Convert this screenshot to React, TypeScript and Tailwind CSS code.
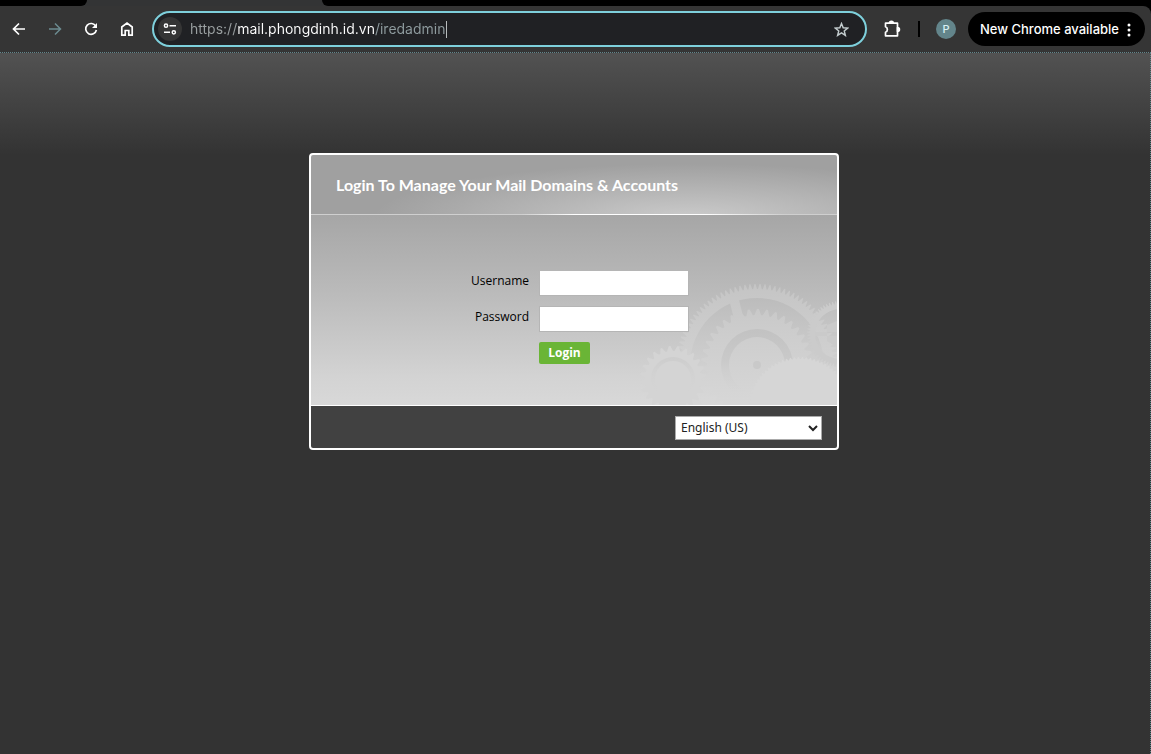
import { useState } from 'react';

const gearPath = (cx: number, cy: number, outer: number, inner: number, teeth: number) => {
  const points: string[] = [];
  for (let i = 0; i < teeth; i++) {
    const step = (Math.PI * 2) / teeth;
    const a = i * step;
    // root, root, tip, tip
    [
      [inner, 0],
      [inner, 0.2],
      [outer, 0.5],
      [outer, 0.7],
    ].forEach(([r, offset]) => {
      const t = a + step * offset;
      points.push(`${(cx + r * Math.cos(t)).toFixed(2)},${(cy + r * Math.sin(t)).toFixed(2)}`);
    });
  }
  return `M${points.join('L')}Z`;
};

const circlePath = (cx: number, cy: number, r: number) =>
  `M${cx - r},${cy}a${r},${r} 0 1,0 ${r * 2},0a${r},${r} 0 1,0 ${-r * 2},0Z`;

const iconButton = 'flex h-9 w-9 shrink-0 items-center justify-center rounded-full';

const Gears = () => (
  <svg
    aria-hidden="true"
    className="pointer-events-none absolute right-0 bottom-0"
    width="200"
    height="130"
    viewBox="0 0 200 130"
    fillRule="evenodd"
  >
    <defs>
      <linearGradient id="gearLight" gradientUnits="userSpaceOnUse" x1="0" y1="0" x2="0" y2="130">
        <stop offset="0" stopColor="#c3c3c3" />
        <stop offset="0.5" stopColor="#cecece" />
        <stop offset="1" stopColor="#d7d7d7" />
      </linearGradient>
      <linearGradient id="gearShade" gradientUnits="userSpaceOnUse" x1="0" y1="50" x2="0" y2="118">
        <stop offset="0" stopColor="#c1c1c1" />
        <stop offset="0.5" stopColor="#c9c9c9" />
        <stop offset="1" stopColor="#d3d3d3" stopOpacity="0" />
      </linearGradient>
    </defs>
    {/* large ring with spoke */}
    <path fill="url(#gearLight)" d={gearPath(120, 90, 81, 76, 100) + circlePath(120, 90, 67)} />
    <path fill="url(#gearLight)" d="M92 24l9-3 8 32-9 3z" />
    {/* middle gear */}
    <path fill="url(#gearLight)" d={gearPath(120, 90, 56, 50, 38)} />
    <path fill="url(#gearShade)" d={circlePath(120, 90, 36) + circlePath(120, 90, 28)} />
    <circle cx="120" cy="90" r="4" fill="#c9c9c9" />
    {/* small left gear */}
    <path fill="#d4d4d4" d={gearPath(36, 104, 33, 28, 24)} />
    <path fill="url(#gearShade)" fillOpacity="0.6" d={circlePath(36, 104, 22) + circlePath(36, 104, 18)} />
    {/* right edge wheel */}
    <path fill="#cbcbcb" d={gearPath(203, 59, 33, 30, 64) + circlePath(203, 59, 25)} />
    <path fill="#cacaca" d="M178 57h22v4h-22zM190 50l10-4v26l-10-6z" />
    {/* lower right gear */}
    <path fill="#d6d6d6" d={gearPath(163, 134, 52, 50, 80)} />
  </svg>
);

const TabStrip = () => (
  <div className="flex h-1.5 bg-[#333435]">
    <div className="w-[87px] rounded-br-lg bg-black" />
    <div className="w-[235px]" />
    <div className="flex-1 rounded-bl-lg bg-black" />
  </div>
);

const Toolbar = () => {
  const [url, setUrl] = useState('https://mail.phongdinh.id.vn/iredadmin');

  return (
    <div className="bg-black">
      <div className="flex h-[46px] items-center rounded-tr-lg bg-[#353535] pr-1.5 pl-px text-white">
        <button aria-label="Back" className={iconButton}>
          <svg width="14" height="14" viewBox="0 0 14 14" fill="none" stroke="currentColor" strokeWidth="1.7">
            <path d="M13 7H2M7 1.5L1.5 7 7 12.5" />
          </svg>
        </button>
        <button aria-label="Forward" className={`${iconButton} text-[#6c8b90]`}>
          <svg width="14" height="14" viewBox="0 0 14 14" fill="none" stroke="currentColor" strokeWidth="1.5">
            <path d="M1 7h11M7 1.5L12.5 7 7 12.5" />
          </svg>
        </button>
        <button aria-label="Reload" className={iconButton}>
          <svg width="14" height="14" viewBox="0 0 14 14" fill="none" stroke="currentColor" strokeWidth="1.7">
            <path d="M11.8 4.2A5.4 5.4 0 1 0 12.4 8" />
            <path d="M13 1v5H8z" fill="currentColor" stroke="none" />
          </svg>
        </button>
        <button aria-label="Home" className={iconButton}>
          <svg width="14" height="16" viewBox="0 0 14 16" fill="none" stroke="currentColor" strokeWidth="1.7">
            <path d="M1.8 14.2V6L7 2l5.2 4v8.2H8.8V9.5H5.2v4.700z" />
          </svg>
        </button>

        <div className="ml-[7px] flex h-9 min-w-0 flex-1 items-center rounded-full border-2 border-[#7ed0dc] bg-[#202124] pr-4 pl-1">
          <button
            aria-label="View site information"
            className="flex h-6 w-6 shrink-0 items-center justify-center rounded-full bg-[#353535]"
          >
            <svg width="14" height="12" viewBox="0 0 14 12" fill="none" stroke="white" strokeWidth="1.5">
              <circle cx="3" cy="2.7" r="1.6" />
              <path d="M6.5 2.7H13M1 9.3h6" />
              <circle cx="10.8" cy="9.3" r="1.6" />
            </svg>
          </button>
          <div className="ml-2 flex min-w-0 flex-1 items-center">
            {/* scheme and path are dimmed, host is white */}
            <input
              aria-label="Address"
              value={url}
              onChange={(e) => setUrl(e.target.value)}
              className="h-6 w-64 bg-[linear-gradient(90deg,#9aa0a1_47px,#fff_47px,#fff_185px,#8f9c9f_185px)] bg-clip-text pb-0.5 font-['Inter',sans-serif] text-sm text-transparent outline-none"
            />
            <span className="h-[17px] w-px bg-[#b8bcbd]" />
          </div>
          <button aria-label="Bookmark this page" className="shrink-0">
            <svg width="15" height="15" viewBox="0 0 24 24" fill="none" stroke="#c4cdcf" strokeWidth="2.3">
              <path d="M12 2.500l2.700 6.700 7.200.5-5.500 4.600 1.800 7L12 17.400l-6.200 3.900 1.800-7-5.500-4.600 7.200-.5z" />
            </svg>
          </button>
        </div>

        <button aria-label="Extensions" className="ml-4 shrink-0">
          <svg width="18" height="18" viewBox="0 0 18 18" fill="none" stroke="white" strokeWidth="1.7" strokeLinejoin="round">
            <path d="M2.5 3.2H14.5V15.8H2.5V12.2C5 11.5 5 7.5 2.500 6.8Z" />
            <path d="M6.500 3.200a1.900 1.900 0 0 1 3.800 0zM14.500 7.500a1.900 1.900 0 0 1 0 3.800z" fill="white" />
          </svg>
        </button>
        <div className="ml-[17px] h-4 w-0.5 shrink-0 bg-black" />
        <button
          aria-label="Profile"
          className="ml-4 h-5 w-5 shrink-0 rounded-full bg-[#63858b] text-center font-['Inter',sans-serif] text-[11px] leading-5 font-medium text-[#d8f0f3]"
        >
          P
        </button>
        <button className="ml-3 flex h-[34px] w-[177px] shrink-0 items-center justify-between rounded-full bg-black pt-px pr-3.5 pl-3 font-['Inter',sans-serif] text-[13px] font-medium">
          New Chrome available
          <svg width="4" height="14" viewBox="0 0 4 14" fill="white" aria-hidden="true">
            <circle cx="2" cy="2" r="1.5" />
            <circle cx="2" cy="7" r="1.5" />
            <circle cx="2" cy="12" r="1.5" />
          </svg>
        </button>
      </div>
    </div>
  );
};

const LoginCard = () => {
  const [username, setUsername] = useState('');
  const [password, setPassword] = useState('');

  return (
    <div className="w-[530px] overflow-hidden rounded border-2 border-white bg-white">
      <div className="flex h-[59px] items-center bg-[#a0a0a0] bg-[radial-gradient(ellipse_60%_90%_at_72%_105%,#cacaca,transparent)] px-[25px]">
        <h1 className="font-['Lato',sans-serif] text-base font-bold text-white">
          Login To Manage Your Mail Domains &amp; Accounts
        </h1>
      </div>
      <div className="h-px bg-[linear-gradient(90deg,#cfcfcf_40%,#fff_50%,#fff_75%,#cfcfcf_90%)]" />

      <form
        onSubmit={(e) => e.preventDefault()}
        className="relative h-[190px] bg-[linear-gradient(#a6a6a6,#bababa_40%,#d3d3d3_85%,#d8d8d8)] pt-[55px] font-['Open_Sans',sans-serif] text-xs text-black"
      >
        <Gears />
        <div className="relative grid grid-cols-[218px_150px] gap-2.5">
          <label htmlFor="username" className="pt-0.5 text-right leading-[18px]">
            Username
          </label>
          <input
            id="username"
            value={username}
            onChange={(e) => setUsername(e.target.value)}
            className="h-[26px] border border-[#b5b5b5] bg-white px-1 outline-none"
          />
          <label htmlFor="password" className="pt-0.5 text-right leading-[18px]">
            Password
          </label>
          <input
            id="password"
            type="password"
            value={password}
            onChange={(e) => setPassword(e.target.value)}
            className="h-[26px] border border-[#b5b5b5] bg-white px-1 outline-none"
          />
          <button
            type="submit"
            className="col-start-2 h-[22px] w-[51px] rounded-xs bg-[#6ab536] text-xs font-bold text-white"
          >
            Login
          </button>
        </div>
      </form>

      <div className="mt-px flex justify-end bg-[#414141] px-[15px] pt-2.5 pb-2">
        <div className="relative">
          <select
            aria-label="Language"
            className="block h-6 w-[147px] appearance-none border border-[#aaa] bg-white px-[5px] font-['Noto_Sans',sans-serif] text-xs text-[#222] outline-none"
          >
            <option>English (US)</option>
          </select>
          <svg
            aria-hidden="true"
            className="pointer-events-none absolute top-2 right-1"
            width="10"
            height="8"
            viewBox="0 0 10 8"
            fill="none"
            stroke="#222"
            strokeWidth="2"
          >
            <path d="M1 2l4 4 4-4" />
          </svg>
        </div>
      </div>
    </div>
  );
};

const App = () => {
  return (
    <div className="flex min-h-screen flex-col bg-[#333]">
      <header>
        <TabStrip />
        <Toolbar />
      </header>
      <main className="flex flex-1 items-start justify-center border-t border-r border-dotted border-[#63858b] bg-[linear-gradient(#525252,#333_102px)] pt-[100px] pr-0.5">
        <LoginCard />
      </main>
    </div>
  );
};

export default App;
